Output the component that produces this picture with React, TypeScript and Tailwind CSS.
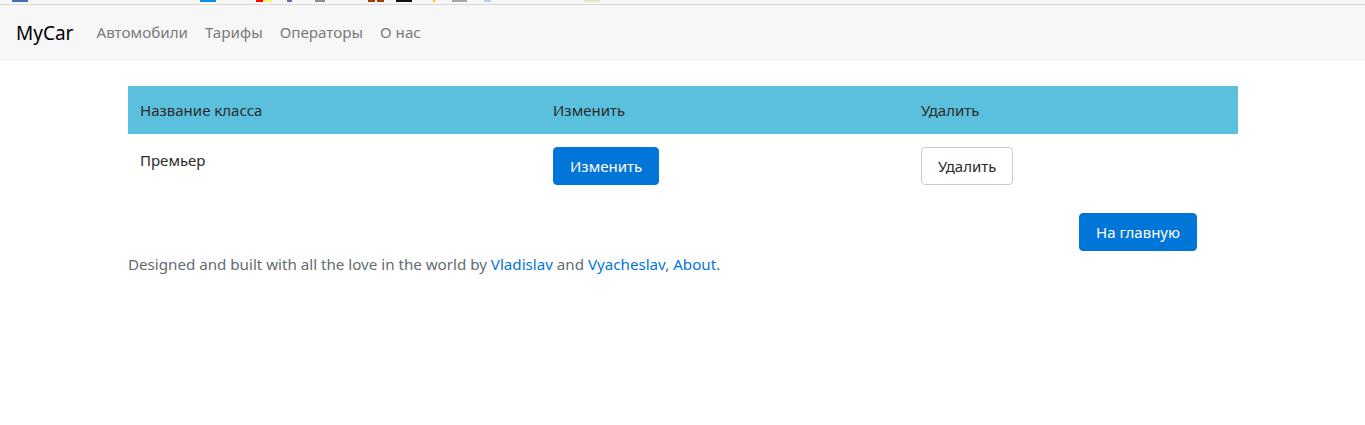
import React from 'react';

const stripIcons = [
  { left: 12, width: 16, color: 'bg-[#3f6fb5]' },
  { left: 200, width: 16, color: 'bg-[#0b8de6]' },
  { left: 256, width: 7, color: 'bg-[#ff0000]' },
  { left: 263, width: 9, color: 'bg-[#fff176]' },
  { left: 287, width: 5, color: 'bg-[#7b5ab5]' },
  { left: 315, width: 10, color: 'bg-[#8a9099]' },
  { left: 368, width: 7, color: 'bg-[#a33a0a]' },
  { left: 377, width: 7, color: 'bg-[#a33a0a]' },
  { left: 396, width: 16, color: 'bg-[#111111]' },
  { left: 433, width: 2, color: 'bg-[#f7c600]' },
  { left: 452, width: 15, color: 'bg-[#a8a8a8]' },
  { left: 484, width: 7, color: 'bg-[#bcd0f2]' },
  { left: 584, width: 16, color: 'bg-[#d8e8c8]' },
];

const App: React.FC = () => {
  const navLinks = ['Автомобили', 'Тарифы', 'Операторы', 'О нас'];

  return (
    <div className="min-h-[425px] bg-white text-[#292b2c]" style={{ fontFamily: '"Noto Sans", "Open Sans", sans-serif' }}>
      {/* Browser bookmark strip, cut off */}
      <div className="relative h-[5px] bg-[#f7f7f7] border-b border-[#d9d9d9]">
        {stripIcons.map((icon, i) => (
          <div
            key={i}
            className={`absolute top-0 h-[2px] ${icon.color}`}
            style={{ left: icon.left, width: icon.width }}
          />
        ))}
      </div>

      {/* Navbar */}
      <nav className="h-[56px] bg-[#f7f7f7] flex items-center px-4">
        <a className="text-[19px] text-black mr-[23px] leading-none">MyCar</a>
        <div className="flex items-center gap-[17px]">
          {navLinks.map((link) => (
            <a key={link} className="text-[15.2px] text-[#7a7a7a] leading-none">
              {link}
            </a>
          ))}
        </div>
      </nav>

      {/* Content */}
      <div className="w-[1110px] ml-[128px] pt-[25px]">
        <table className="w-full border-collapse text-[15px]">
          <thead>
            <tr className="bg-[#5bc0de] h-[48px]">
              <th className="text-left font-normal px-3 w-[413px]">Название класса</th>
              <th className="text-left font-normal px-3 w-[368px]">Изменить</th>
              <th className="text-left font-normal px-3">Удалить</th>
            </tr>
          </thead>
          <tbody>
            <tr>
              <td className="px-3 pt-[15px] pb-[13px] align-top">Премьер</td>
              <td className="px-3 pt-[13px] pb-[13px] align-top">
                <button className="h-[38px] px-4 rounded bg-[#0275d8] border border-[#0275d8] text-white text-[15px]">
                  Изменить
                </button>
              </td>
              <td className="px-3 pt-[13px] pb-[13px] align-top">
                <button className="h-[38px] px-4 rounded bg-white border border-[#cccccc] text-[#292b2c] text-[15px]">
                  Удалить
                </button>
              </td>
            </tr>
          </tbody>
        </table>

        <div className="flex justify-end pr-[41px] mt-[15px]">
          <button className="h-[38px] px-4 rounded bg-[#0275d8] border border-[#0275d8] text-white text-[15px]">
            На главную
          </button>
        </div>

        <p className="text-[15.15px] text-[#636c72] mt-[2px]">
          Designed and built with all the love in the world by{' '}
          <a className="text-[#0275d8]">Vladislav</a> and{' '}
          <a className="text-[#0275d8]">Vyacheslav</a>,{' '}
          <a className="text-[#0275d8]">About</a>.
        </p>
      </div>
    </div>
  );
};

export default App;
